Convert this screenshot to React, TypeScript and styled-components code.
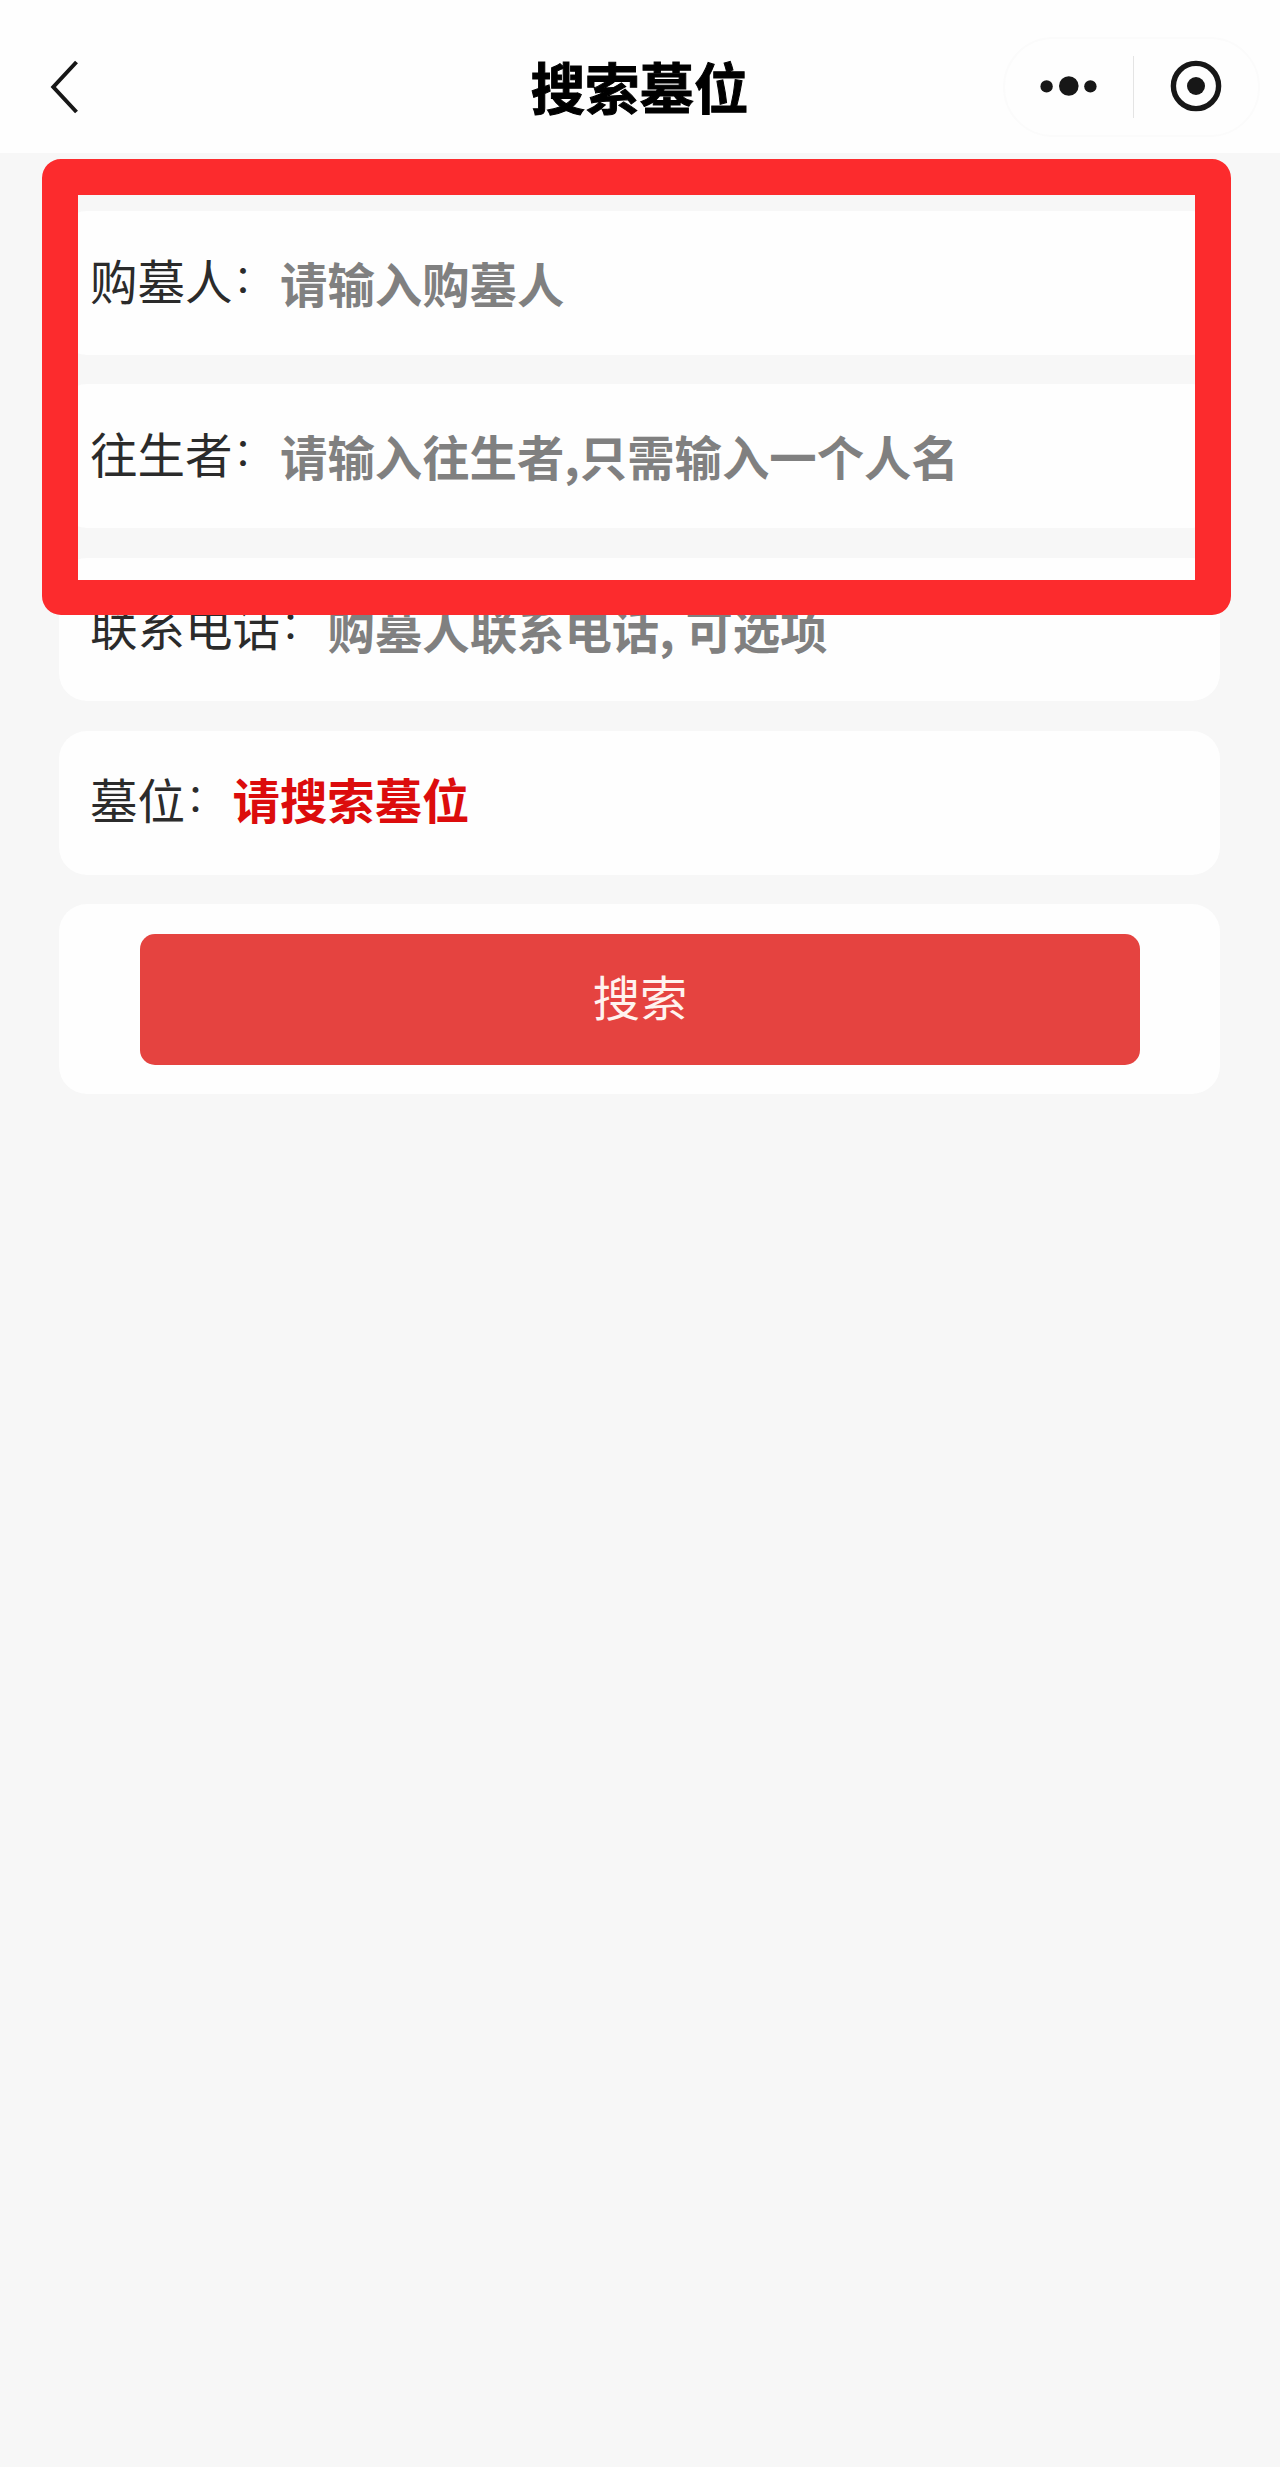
import React from "react";
import styled, { createGlobalStyle } from "styled-components";

const GlobalStyle = createGlobalStyle`
  * { box-sizing: border-box; }
  body {
    margin: 0;
    background: #f7f7f7;
    font-family: "Noto Sans CJK SC", "Noto Sans", sans-serif;
  }
`;

const Page = styled.div`
  position: relative;
  width: 1280px;
  min-height: 2467px;
  background: #f7f7f7;
`;

const NavBar = styled.header`
  display: grid;
  grid-template-columns: 277px 1fr 277px;
  align-items: center;
  height: 153px;
  padding: 21px 20px 0 0;
  background: #fefefe;
`;

const BackButton = styled.button`
  display: flex;
  margin: 0 0 0 45px;
  padding: 0;
  width: 40px;
  border: 0;
  background: none;
`;

const Title = styled.h1`
  margin: 0 0 3px 19px;
  font-size: 54.4px;
  line-height: 80px;
  font-weight: 700;
  text-align: center;
  color: #000;
  -webkit-text-stroke: 1px #000;
`;

const Capsule = styled.div`
  display: flex;
  align-items: center;
  justify-self: end;
  width: 257px;
  height: 100px;
  border: 2px solid #fbfbfb;
  border-radius: 50px;
`;

const CapsuleItem = styled.div<{ $width: number }>`
  display: flex;
  width: ${(p) => p.$width}px;
  justify-content: center;
`;

const Divider = styled.div`
  width: 1px;
  height: 62px;
  background: #e4e4e4;
`;

const Form = styled.main`
  display: flex;
  flex-direction: column;
  gap: 29.5px;
  padding: 58px 60px 0 59px;
`;

const Row = styled.div`
  display: flex;
  align-items: center;
  height: 143.8px;
  padding: 0 31px;
  border-radius: 28px;
  background: #fefefe;
  font-size: 47.5px;
  line-height: 70px;
  white-space: pre;
`;

const Label = styled.span<{ $lift: number }>`
  display: flex;
  margin-top: ${(p) => -p.$lift}px;
  color: #2b2b2b;
`;

const Colon = styled.span`
  width: 47.5px;
  padding-left: 1px;
  font-size: 38px;
  line-height: 62px;
`;

const Value = styled.span<{ $color: string; $lift: number }>`
  margin-top: ${(p) => -p.$lift}px;
  font-size: 47.4px;
  font-weight: 700;
  color: ${(p) => p.$color};
`;

const ActionCard = styled.div`
  display: flex;
  justify-content: center;
  padding: 30px 80px 29px 81px;
  border-radius: 28px;
  background: #fefefe;
`;

const SearchButton = styled.button`
  flex: 1;
  height: 131px;
  padding: 0 0 9px;
  border: 0;
  border-radius: 15px;
  background: #e54340;
  color: #fff3ef;
  font: 400 47.3px "Noto Sans CJK SC", "Noto Sans", sans-serif;
`;

const Highlight = styled.div`
  position: absolute;
  left: 42px;
  top: 159px;
  width: 1189px;
  height: 456px;
  border: solid #fc2b2d;
  border-width: 36px 36px 35px;
  border-radius: 19px;
`;

const rows = [
  { label: "购墓人", value: "请输入购墓人", color: "#808080", labelLift: 6, valueLift: 0 },
  { label: "往生者", value: "请输入往生者,只需输入一个人名", color: "#808080", labelLift: 6, valueLift: 0 },
  { label: "联系电话", value: "购墓人联系电话, 可选项", color: "#808080", labelLift: 6, valueLift: 0 },
  { label: "墓位", value: "请搜索墓位", color: "#dc0c0c", labelLift: 8, valueLift: 8 },
];

export default function App() {
  return (
    <>
      <GlobalStyle />
      <Page>
        <NavBar>
          <BackButton aria-label="返回">
            <svg width="40" height="60" viewBox="0 0 40 60" fill="none">
              <path d="M31.5 5 8.3 30 31.5 55" stroke="#171717" strokeWidth="4" />
            </svg>
          </BackButton>
          <Title>搜索墓位</Title>
          <Capsule>
            <CapsuleItem $width={128}>
              <svg width="60" height="24" viewBox="0 0 60 24" fill="#171717">
                <circle cx="7.6" cy="11.4" r="6.2" />
                <circle cx="29.8" cy="11" r="9.8" />
                <circle cx="51.4" cy="11.4" r="6.2" />
              </svg>
            </CapsuleItem>
            <Divider />
            <CapsuleItem $width={125}>
              <svg width="54" height="54" viewBox="0 0 54 54">
                <circle cx="27" cy="26" r="22.6" fill="none" stroke="#171717" strokeWidth="5.4" />
                <circle cx="27" cy="26" r="9" fill="#171717" />
              </svg>
            </CapsuleItem>
          </Capsule>
        </NavBar>
        <Form>
          {rows.map((row) => (
            <Row key={row.label}>
              <Label $lift={row.labelLift}>
                {row.label}
                <Colon>：</Colon>
              </Label>
              <Value $color={row.color} $lift={row.valueLift}>{row.value}</Value>
            </Row>
          ))}
          <ActionCard>
            <SearchButton>搜索</SearchButton>
          </ActionCard>
        </Form>
        <Highlight />
      </Page>
    </>
  );
}
